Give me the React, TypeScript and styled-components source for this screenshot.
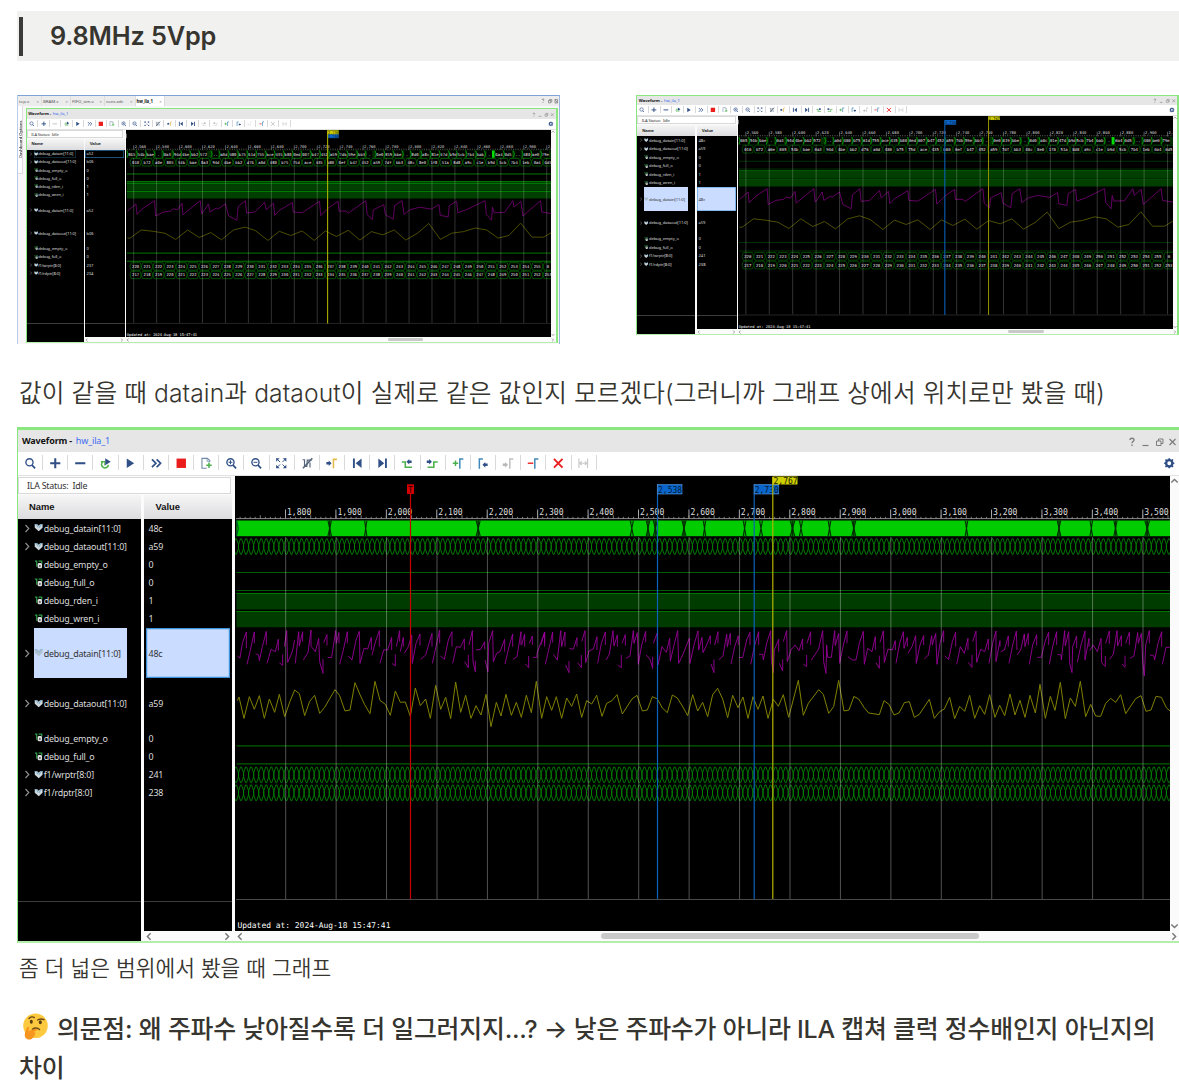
import React from "react";
import styled, { createGlobalStyle, css } from "styled-components";

/* ---------- helpers ---------- */

const u = (n: number) => `calc(var(--k) * ${n}px)`;
const uiFont = `"Noto Sans", "Open Sans", sans-serif`;
const docFont = `Inter, "Noto Sans CJK KR", sans-serif`;
const monoFont = `"DejaVu Sans Mono", "Liberation Mono", monospace`;

const Global = createGlobalStyle`
  * { box-sizing: border-box; }
  body { margin: 0; background: #fff; color: #37352f; font-family: ${docFont}; overflow: hidden; }
`;

/* ---------- document ---------- */

const Page = styled.main`
  width: 1179px;
  height: 1087px;
  padding: 11px 0 0 17px;
  overflow: hidden;
  background: #fff;
`;

const HeadingBlock = styled.section`
  display: flex;
  align-items: center;
  height: 50px;
  padding-left: 2px;
  background: #f1f1ef;
`;

const Quote = styled.h2`
  display: flex;
  align-items: center;
  height: 39px;
  margin: 0;
  padding: 0 0 2px 27px;
  border-left: 4px solid #3b3b3b;
  font-size: 25.3px;
  font-weight: 600;
  letter-spacing: -0.15px;
`;

const Gallery = styled.section`
  display: flex;
  justify-content: space-between;
  align-items: flex-start;
  height: 249px;
  margin-top: 34px;
`;

const Paragraph = styled.p`
  margin: 29px 0 0 2px;
  height: 54px;
  font-size: 24.65px;
  letter-spacing: 0.11px;
  line-height: 40px;
  font-weight: 350;
  white-space: nowrap;
`;

const Caption = styled.figcaption`
  margin: 7px 0 0 2px;
  height: 36px;
  font-size: 21.45px;
  line-height: 36px;
  font-weight: 350;
  white-space: nowrap;
`;

const Figure = styled.figure`
  margin: 0;
`;

const Question = styled.h3`
  margin: 24px 0 0 2px;
  font-size: 24.9px;
  letter-spacing: -0.22px;
  line-height: 39px;
  font-weight: 500;
  white-space: nowrap;
`;

const EmojiSvg = styled.svg`
  width: 26px;
  height: 27px;
  margin: 0 9px 0 3px;
  vertical-align: -2px;
`;

/* ---------- waveform window ---------- */

const Pane = styled.section<{ $k: number; $r: number; $w: number; $h: number; $b: number }>`
  --k: ${(p) => p.$k};
  --r: ${(p) => p.$r};
  display: flex;
  flex-direction: column;
  width: ${(p) => p.$w}px;
  height: ${(p) => p.$h}px;
  border: 1px solid #8ae67e;
  border-top-width: ${(p) => p.$b}px;
  border-right-width: ${(p) => (p.$b > 1 ? 0 : 2)}px;
  border-bottom: ${(p) => (p.$b > 1 ? 2 : 1)}px solid #b5eeac;
  background: #fbfbfb;
  font-family: ${uiFont};
  overflow: hidden;
  flex: none;
`;

const TitleBar = styled.header<{ $h: number }>`
  display: flex;
  justify-content: space-between;
  align-items: center;
  height: ${(p) => p.$h}px;
  flex: none;
  padding: 0 ${u(1)} 0 ${u(4)};
  background: #e6e6e6;
  color: #111;
  font-size: ${u(9)};
  letter-spacing: ${u(-0.15)};
  white-space: nowrap;
  b { font-weight: 700; margin-right: ${u(1.6)}; }
  span { color: #3b6cf0; }
`;

const WindowIcons = styled.svg`
  width: ${u(50)};
  height: ${u(12)};
  margin-top: ${u(3)};
  flex: none;
`;

const Toolbar = styled.nav<{ $h: number }>`
  display: flex;
  align-items: center;
  height: ${(p) => p.$h}px;
  flex: none;
  background: #fff;
  border-bottom: ${u(1)} solid #e2e2e2;
`;

const Tool = styled.span`
  display: flex;
  justify-content: center;
  align-items: center;
  width: ${u(25.18)};
  height: ${u(15)};
  flex: none;
  border-right: ${u(1)} solid #d9d9d9;
  svg { width: ${u(12.5)}; height: ${u(12.5)}; }
`;

const ToolRow = styled.div<{ $lead: number }>`
  display: flex;
  align-items: center;
  margin: 0 0 ${u(1)} ${(p) => p.$lead}px;
`;

const Settings = styled(Tool)`
  width: ${u(20)};
  margin-left: auto;
  border: 0;
`;

const Body = styled.div`
  display: flex;
  flex: 1;
  min-height: 0;
`;

const Signals = styled.div<{ $w: number }>`
  display: flex;
  flex-direction: column;
  width: ${(p) => p.$w}px;
  flex: none;
`;

const Status = styled.div`
  display: flex;
  align-items: center;
  height: ${u(17.5)};
  flex: none;
  margin: ${u(0.5)} ${u(4.5)} ${u(1)} 0;
  padding: ${u(1)} 0 0 ${u(8)};
  border: ${u(1)} solid #d9d9d9;
  background: #fff;
  color: #333;
  font-size: ${u(8.9)};
  letter-spacing: ${u(-0.25)};
  white-space: pre;
`;

const Columns = styled.div<{ $g: number }>`
  display: flex;
  flex: 1;
  gap: ${(p) => p.$g}px;
  min-height: 0;
`;

const Column = styled.div<{ $w: number }>`
  display: flex;
  flex-direction: column;
  width: ${(p) => p.$w}px;
  flex: none;
  background: #000;
  color: #dcdcdc;
`;

const ColumnHead = styled.div<{ $pad: number }>`
  display: flex;
  align-items: center;
  height: ${u(24)};
  flex: none;
  padding: 0 0 ${u(1.5)} ${(p) => u(p.$pad)};
  background: linear-gradient(#f6f6f7, #dcdcde);
  color: #111;
  font: 700 ${u(9.4)} "Liberation Sans", Arial, sans-serif;
`;

const rowBase = css<{ $tall?: boolean }>`
  display: flex;
  align-items: center;
  height: calc(var(--r) * ${(p) => (p.$tall ? 50.6 : 18.15)}px);
  flex: none;
  font-size: ${u(8.9)};
  letter-spacing: ${u(-0.2)};
  white-space: nowrap;
`;

const NameRow = styled.div<{ $tall?: boolean }>`
  ${rowBase}
  padding-left: ${u(4.5)};
`;

const NameCell = styled.span<{ $selected?: boolean; $focus?: boolean }>`
  display: flex;
  align-items: center;
  width: ${u(93)};
  height: 100%;
  ${(p) => p.$selected && css`background: #cadcff; color: #333;`}
  ${(p) => p.$focus && css`box-shadow: inset 0 0 0 ${u(1)} #1d4a66;`}
`;

const ValueRow = styled.div<{ $tall?: boolean; $selected?: boolean; $focus?: boolean }>`
  ${rowBase}
  margin: 0 ${u(2)} 0 ${u(1.5)};
  padding-left: ${u(3)};
  ${(p) => p.$selected && css`background: #cadcff; color: #333; box-shadow: inset 0 0 0 ${u(1.2)} #3d92dc;`}
  ${(p) => p.$focus && css`box-shadow: inset 0 0 0 ${u(1.5)} #256aa0;`}
`;

const Twisty = styled.svg`
  width: ${u(11)};
  height: ${u(9)};
  flex: none;
`;

const SignalIcon = styled.svg`
  width: ${u(9.6)};
  height: ${u(9.4)};
  margin-right: ${u(0.6)};
  flex: none;
`;

const Footer = styled.div<{ $h: number }>`
  height: ${(p) => p.$h}px;
  margin-top: auto;
  flex: none;
  border-top: ${u(1.6)} solid #3c3c3c;
`;

const ScrollX = styled.div`
  display: flex;
  align-items: center;
  justify-content: space-between;
  height: ${u(10)};
  flex: none;
  background: #fbfbfb;
  padding: 0 ${u(1)};
  svg { width: ${u(8)}; height: ${u(9)}; flex: none; }
`;

const Track = styled.div<{ $before: number; $thumb: number }>`
  display: flex;
  flex: 1;
  &::before { content: ""; width: ${(p) => p.$before}px; }
  &::after { content: ""; width: ${(p) => p.$thumb}px; height: ${u(6)}; border-radius: ${u(3)}; background: #c9c9c9; }
`;

const Wave = styled.div`
  display: flex;
  flex-direction: column;
  flex: 1;
  min-width: 0;
`;

const PlotRow = styled.div`
  display: flex;
  flex: 1;
  min-height: 0;
`;

const Plot = styled.svg`
  display: block;
  flex: 1;
  min-width: 0;
  height: 100%;
  background: #000;
  font-family: ${monoFont};
`;

const ScrollY = styled.div`
  display: flex;
  flex-direction: column;
  align-items: center;
  justify-content: space-between;
  width: ${u(9)};
  flex: none;
  background: #fbfbfb;
  padding: ${u(1)} 0;
  svg { width: ${u(9)}; height: ${u(8)}; }
`;

/* ---------- icons ---------- */

const N = "#2f4f86";
const G = "#4bb04b";
const B = "#3f88b8";

const arrowL = (c: string, x = 0, y = 0) => <path d={`M${x} ${y + 3}l3.6-3.6v2h3v3.2h-3v2z`} fill={c} />;
const arrowR = (c: string, x = 0, y = 0) => <path d={`M${x + 6.6} ${y + 3}l-3.6-3.6v2h-3v3.2h3v2z`} fill={c} />;

const lens = (
  <g fill="none" stroke={N} strokeWidth="1.7">
    <circle cx="7" cy="6.8" r="4.6" />
    <path d="M10.2 10.3l4 4.2" strokeWidth="2.2" />
  </g>
);

const tools: React.ReactNode[] = [
  lens,
  <path d="M8 1.5v13M1.5 8h13" stroke={N} strokeWidth="2.6" />,
  <path d="M1.5 8h13" stroke={N} strokeWidth="2.6" />,
  <g><path d="M5 6a4.4 4.4 0 1 0 7 4" fill="none" stroke={G} strokeWidth="1.9" /><path d="M2.5 6h5v5" fill="none" stroke={G} strokeWidth="1.5" /><path d="M8 1.5l7 4.5-7 4.5z" fill={N} /></g>,
  <path d="M3.5 2l9.5 6-9.5 6z" fill={N} />,
  <path d="M2.5 3l5 5-5 5M8.5 3l5 5-5 5" fill="none" stroke={N} strokeWidth="2.2" />,
  <rect x="2" y="2" width="12" height="12" fill="#ea1c1c" />,
  <g fill="none"><path d="M12.5 6V4.5L9.5 1.7h-7v12.6h6" stroke="#7089a8" strokeWidth="1.4" /><path d="M9 2v3.5h3.5" stroke="#7089a8" /><path d="M8 10.5h7M11.5 7v7" stroke={G} strokeWidth="1.9" /></g>,
  <g>{lens}<path d="M4.5 6.8h5M7 4.3v5" stroke={N} strokeWidth="1.3" /></g>,
  <g>{lens}<path d="M4.5 6.8h5" stroke={N} strokeWidth="1.3" /></g>,
  <g fill={N}><path d="M1.5 1.5h4.5L1.5 6zM14.5 1.5H10L14.5 6zM1.5 14.5V10L6 14.5zM14.5 14.5V10L10 14.5z" /><path d="M2 2l4.5 4.5M14 2L9.5 6.5M2 14l4.5-4.5M14 14L9.5 9.5" stroke={N} strokeWidth="1.2" /></g>,
  <g fill="none" stroke="#55657c"><path d="M2 3.5h2.5v8.5h3L8 4h5.5" strokeWidth="1.5" /><path d="M14.5 1.5L2.5 14.5" strokeWidth="2" /><path d="M11.5 7v6.5" strokeWidth="1.5" /></g>,
  <g>{arrowR(N, 0.5, 5)}<path d="M9.5 14.5V3h4.5" fill="none" stroke="#e3bb4a" strokeWidth="2" /></g>,
  <g fill={N}><path d="M2.5 2h2.4v12H2.5zM13.5 2v12L6 8z" /></g>,
  <g fill={N}><path d="M11.5 2h2.4v12h-2.4zM3 2v12L10.5 8z" /></g>,
  <g>{arrowL(N, 7, 3)}<path d="M1 6.5h4.5V13H14" fill="none" stroke={G} strokeWidth="2" /></g>,
  <g>{arrowR(N, 1, 3)}<path d="M2 13h8V6.500h5" fill="none" stroke={G} strokeWidth="2" /></g>,
  <g fill="none"><path d="M1 8h7M4.5 4.5v7" stroke={G} strokeWidth="1.9" /><path d="M10 15V2.5h4.5" stroke={B} strokeWidth="1.9" /></g>,
  <g><path d="M3 15V2.5h4.5" fill="none" stroke={B} strokeWidth="1.9" />{arrowL(N, 7, 7)}</g>,
  <g>{arrowR("#b8b8b8", 1, 7)}<path d="M10 15V2.5h4.5" fill="none" stroke="#c0c0c0" strokeWidth="1.9" /></g>,
  <g fill="none"><path d="M1 8h7" stroke="#e33" strokeWidth="2" /><path d="M10 15V2.5h4.5" stroke={B} strokeWidth="1.9" /></g>,
  <path d="M2.5 2.5l11 11M13.5 2.5l-11 11" stroke="#ea1c1c" strokeWidth="2.4" />,
  <path d="M2.5 2v12M13.5 2v12M3.5 8h9M6 5.5L3.5 8 6 10.5M10 5.5L12.5 8 10 10.5" fill="none" stroke="#c9c9c9" strokeWidth="1.5" />,
];

const Gear = () => (
  <svg viewBox="0 0 16 16">
    <circle cx="8" cy="8" r="4" fill="none" stroke={N} strokeWidth="3" />
    <path d="M8 1.5v3M8 11.5v3M1.5 8h3M11.5 8h3M3.2 3.2l2 2M10.8 10.8l2 2M12.8 3.2l-2 2M5.2 10.8l-2 2" stroke={N} strokeWidth="2.2" />
  </svg>
);

const WinIcons = () => (
  <WindowIcons viewBox="0 0 50 12" fill="none" stroke="#7d7d7d" strokeWidth="1.2">
    <path d="M2 4c0-2.4 4-2.4 4 0 0 1.5-2 1.5-2 3.2M4 8.6v1.4" strokeWidth="1.4" />
    <path d="M14.5 9.5h6" />
    <path d="M28.5 5h4.5v4.5h-4.5zM30.5 5V3H35v4.5h-2" strokeWidth="1" />
    <path d="M41.5 3l6 6M47.5 3l-6 6" />
  </WindowIcons>
);

const Chevron = ({ d }: { d: "l" | "r" | "u" | "d" }) => {
  const paths = { l: "M7 1L3 5l4 4", r: "M3 1L7 5 3 9", u: "M1 7L5 3l4 4", d: "M1 3L5 7l4-4" };
  return <svg viewBox="0 0 10 10"><path d={paths[d]} fill="none" stroke="#777" strokeWidth="1.8" /></svg>;
};

const BusIcon = ({ dim }: { dim?: boolean }) => (
  <SignalIcon viewBox="0 0 10.5 10" opacity={dim ? 0.75 : 1}>
    <path d="M.8 1.5h3.2l1.2 1.4 1.2-1.4h3v3.5L5.2 9 .8 5z" fill={dim ? "#a9bac4" : "#cfd8dc"} />
    <path d="M.8 1.5h2l1.6 3M9.4 1.5h-2L5.6 5" stroke="#7faec6" strokeWidth="1.2" fill="none" />
  </SignalIcon>
);

const BitIcon = () => (
  <SignalIcon viewBox="0 0 10.5 10">
    <path d="M1 1.2h2v6M5 1.2h3.5v2.5" fill="none" stroke="#2f9a48" strokeWidth="1.4" />
    <rect x="4" y="3.2" width="4.8" height="5.8" rx="1.5" fill="#dcdcdc" />
    <circle cx="6.4" cy="6.3" r="1" fill="#444" />
  </SignalIcon>
);

/* ---------- signals ---------- */

type Signal = { name: string; bus?: boolean; tall?: boolean };
const signals: Signal[] = [
  { name: "debug_datain[11:0]", bus: true },
  { name: "debug_dataout[11:0]", bus: true },
  { name: "debug_empty_o" },
  { name: "debug_full_o" },
  { name: "debug_rden_i" },
  { name: "debug_wren_i" },
  { name: "debug_datain[11:0]", bus: true, tall: true },
  { name: "debug_dataout[11:0]", bus: true, tall: true },
  { name: "debug_empty_o" },
  { name: "debug_full_o" },
  { name: "f1/wrptr[8:0]", bus: true },
  { name: "f1/rdptr[8:0]", bus: true },
];

/* ---------- wide plot ---------- */

const yellowWide = [
  { x: 230, p: "22,302 27,291 42,355 58,290 73,328 88,287 103,355 118,297 134,337 148,283 164,350 180,304 194,270 208,281 224,347 239,304 254,286 269,340 284,322 315,269 329,287 345,333 360,330 375,248 390,284 404,314 420,341 435,244 450,301 466,313 481,346 496,273 511,307 526,306 541,349 556,264 571,317 587,297 601,355 617,256 632,328 647,292 662,356 677,246 692,337 707,286 723,355 738,317 753,345 768,283 783,380 799,307 813,348 828,283 844,346 859,307 874,352 889,286 904,338 919,244 935,355" },
  { x: 540, p: "5,355 20,290 35,331 49,290 65,355 80,294 95,319 110,282 125,352 140,302 155,312 170,286 186,349 200,310 216,302 231,284 247,342 276,297 291,286 307,333 322,330 337,290 352,297 367,324 382,338 397,285 412,294 427,318 443,347 458,284 473,333 488,307 503,350 518,284 533,265 548,297 563,353 578,286 594,323 609,291 624,355 639,290 654,328 669,288 684,355 700,298 715,319 730,284 746,352 775,241 790,346 805,310 836,269 850,283 866,340 881,320 896,241 912,333 927,330 942,289" },
  { x: 850, p: "11,289 26,297 42,322 56,339 88,344 102,302 117,313 132,345 147,339 163,308 178,305 193,352 208,343 238,298 253,355 268,336 283,327 299,292 314,356 329,319 344,334 359,286 374,355 389,317 404,343 419,284 435,352 449,316 464,347 480,282 495,345 510,301 525,352 540,286 556,339 570,253 586,355 601,289 615,331 631,247 646,356 661,294 676,319 691,244 707,350 722,313 737,348 752,349 767,310 782,295 797,307 812,284 827,341 857,296 873,287 888,334 903,330 918,289 934,292 949,323 960,333" },
];

const magentaWide = [
  { x: 230, d: "M22,168L30,174 37,130 49,96 49,145M51,193L60,155 73,96 73,130M77,161L86,165 88,182 97,140 109,94 109,135M111,190L123,148 136,155 145,118 145,152M148,188L158,196 158,163M163,140L170,92 173,187 187,155 194,120M196,190L206,95 208,138 218,95 218,125M220,180L234,158 243,90 243,140M244,140L256,155 266,115 269,185 279,220 279,177M281,128L291,104 291,137M293,173L305,172 317,92 319,130 327,98 327,130M329,193L340,150 352,95 352,130M355,168L366,180 378,120 388,94 390,190 402,145 413,147 424,112 424,150M426,165L438,120 448,92 448,140M450,190L461,150 473,150 485,112 485,150M486,190L496,198 496,163M499,140L509,92 509,125M511,155L520,112 520,140M523,160L535,140 545,105 547,190 558,130 570,102 570,137M572,178L587,165 606,100 606,140M607,190L618,140 629,90 629,130M631,168L643,178 655,120 666,95 666,140M668,190L679,140 691,142 703,117 703,150M704,185L715,203 715,165M717,135L727,92 729,185 736,215 736,182M738,150L752,148 764,125 764,148M765,180L774,215 776,130 788,92 790,185 800,160 810,155 824,118 824,155M825,192L837,140 848,102 848,140M849,178L861,170 873,95 873,135M875,135L884,102 884,140M886,192L896,203 896,168M898,130L907,108 907,135M909,172L921,172 921,160 932,130 944,96 944,140" },
  { x: 540, d: "M3,135L14,96 14,130M16,193L27,145 38,96 38,128M40,163L52,180 62,92 65,140 75,96 75,140M77,195L87,218 87,183M88,145L100,148 111,113 111,140M113,188L124,203 124,165M125,125L135,92 137,188 147,153 160,147 171,110 171,150M173,190L184,130 196,96 196,135M198,180L208,163 219,92 222,138 232,105 232,140M233,195L244,203 244,165M246,130L256,104 256,137M258,175L270,168 280,92 282,130 292,98 295,193 305,135 317,94 317,127M319,165L330,178 338,205 338,170M340,130L351,100 354,195 366,140 379,157 389,115 391,183 402,135 413,92 416,190 428,165 448,115 450,190 462,135 474,93 476,150 486,112 489,158 500,135 511,107 511,133M513,192L522,218 522,178M524,135L534,95 534,130M536,180L549,168 560,102 562,140 571,100 571,135M573,192L584,140 595,107 595,135M597,172L608,173 620,120 630,97 630,135M632,193L643,140 656,95 656,135M657,163L668,163 670,180 680,130 692,92 694,180 700,218 703,150 716,118 716,155M718,190L728,213 728,178M730,125L740,92 742,185 753,150 765,135 777,152 788,117 788,150M790,192L800,200 800,165M801,130L812,95 812,135M814,180L836,147 848,92 851,185 858,220 860,135 863,172 874,172 884,92 886,137 896,100 899,190 909,140 921,93 921,130M924,170L930,175" },
  { x: 850, d: "M0,175L8,180 18,180 28,130 40,94 43,193 53,145 66,155 76,110 76,150M78,188L88,205 88,167M90,127L100,93 103,188 114,147 127,150 136,122 136,150M138,190L149,130 160,95 162,145 172,112 172,140M174,160L186,140 197,107 199,190 210,135 221,107 221,135M223,177L235,165 245,107 247,135 257,100 261,193 270,130 281,92 281,127M284,168L296,178 307,125 317,97 317,140M320,193L331,140 343,160 354,115 354,150M355,187L366,202 366,165M368,125L378,93 380,187 392,148 404,155 415,117 415,150M417,190L428,130 438,93 438,185 450,122 450,140M452,155L463,150 475,108 475,140M477,190L488,135 499,93 501,150M501,165L512,150 523,102 525,140 535,100 535,135M538,193L548,135 560,104 560,137M562,172L574,172 585,125 596,97 596,135M598,193L609,135 620,95 620,135M622,163L633,165 634,180 644,92 646,138 656,95 659,190 666,218 668,140 680,108 680,145M682,187L693,135 705,93 705,180 717,115 717,140M719,152L730,135 742,155 753,115 755,188 766,200 766,168M767,130L778,93 778,132M779,178L790,163 801,92 803,138 814,107 814,140M816,192L825,202 825,167M827,130L838,97 838,135M840,175L852,168 863,98 865,130 874,100 878,185 883,228 887,135 898,92 898,130M900,165L912,168 914,180 924,130 935,95 935,140M937,193L948,142 960,142" },
];

const range = (n: number) => Array.from({ length: n }, (_, i) => i);

function chain(y: number, h: number) {
  const p = 5.043;
  let d = "";
  for (let x = 235.5; x < 1170; x += p) {
    d += `M${x.toFixed(2)} ${y}h1l2 ${h / 2 - 2}v4l-2 ${h / 2 - 2}h-1l-2-${h / 2 - 2}v-4z`;
  }
  return d;
}

const breaks: [number, number][] = [
  [329.7, 3], [365.7, 1.8], [478.2, 3.4], [631.8, 2.6], [648, 2.9], [655.3, 3.4], [684, 3.4], [704.5, 1.9],
  [744.6, 2.2], [761, 2.5], [792.5, 4], [801, 2.6], [829.5, 2.2], [853.8, 3.4], [966.5, 2], [1059, 3], [1091.3, 2], [1115.5, 2.7], [1147.2, 4.2],
];

const WidePlot = () => (
  <Plot viewBox="235 476 935 455" preserveAspectRatio="none">
    {range(18).map((i) => {
      const x = 285.5 + i * 50.43;
      return (
        <g key={i}>
          <text x={x + 1.5} y="515" fontSize="8.1" fill="#ddd">{(1800 + i * 100).toLocaleString("en-US")}</text>
          <path d={`M${x} 509.5v9`} stroke="#aaa" strokeWidth="1" />
        </g>
      );
    })}
    <path d="M236 518.6H1170" stroke="#999" strokeWidth=".9" />
    {range(185).map((i) => (
      <path key={i} d={`M${240.1 + i * 5.043} ${(i + 1) % 5 === 0 ? 515.2 : 516.8}V518.6`} stroke="#999" strokeWidth=".8" />
    ))}
    <rect x="236.5" y="520.5" width="934" height="15.7" fill="#0c0" />
    <path d="M236.5 520.5l1.8 7.8-1.8 7.8" fill="none" stroke="#053" strokeWidth="1.2" />
    {breaks.map(([x, w], i) => {
      const h = w / 2 + 0.3;
      return (
        <g key={i}>
          <rect x={x - w / 4} y="520.5" width={w / 2} height="15.7" fill="#000" opacity={w > 2.6 ? 0.75 : 0.2} />
          <path d={`M${x - h} 520.5L${x + h} 536.2M${x + h} 520.5L${x - h} 536.2`} stroke="#022d02" strokeWidth="1.1" />
        </g>
      );
    })}
    <g fill="none" stroke="#008400" strokeWidth=".9">
      <path d={chain(538.7, 15.6)} />
      <path d={chain(767, 15.6)} />
      <path d={chain(785, 15.6)} />
    </g>
    <path d="M236.5 572.5H1170M236.5 590.5H1170M236.5 745.8H1170M236.5 763.9H1170" stroke="#005f00" strokeWidth="1.2" />
    <path d="M236.5 593h934v16.5h-934zM236.5 611h934v16.2h-934z" fill="#003c00" />
    <path d="M236.5 593.5H1170M236.5 611.5H1170" stroke="#007400" strokeWidth="1.2" />
    {magentaWide.map((s) => (
      <path key={s.x} d={s.d} transform={`translate(${s.x} 600) scale(.33333)`} fill="none" stroke="#9c009c" strokeWidth="2.6" />
    ))}
    {yellowWide.map((s) => (
      <polyline key={s.x} points={s.p} transform={`translate(${s.x} 600) scale(.33333)`} fill="none" stroke="#828200" strokeWidth="3" />
    ))}
    {range(18).map((i) => (
      <path key={i} d={`M${285.7 + i * 50.43} 537V899`} stroke="#fff" strokeOpacity=".32" strokeWidth="1" />
    ))}
    <path d="M236 899.5H1170" stroke="#4a4a4a" strokeWidth="1" />
    <path d="M410.5 488V899" stroke="#c80000" strokeWidth="1.2" />
    <rect x="407" y="484.3" width="7" height="9.7" fill="#d20000" />
    <text x="408.1" y="492.5" fontSize="8" fill="#200">T</text>
    {[[657.5, "2,538"], [754.2, "2,730"]].map(([x, t]) => (
      <g key={t}>
        <path d={`M${x} 484V899`} stroke="#0a62bd" strokeWidth="1.2" />
        <rect x={x} y="484.5" width="24.5" height="9.5" fill="#0a66cc" stroke="#4d86c4" strokeWidth=".7" />
        <text x={Number(x) + 0.5} y="492.5" fontSize="8" fill="#001a33">{t}</text>
      </g>
    ))}
    <path d="M772.8 477V899" stroke="#b5b500" strokeWidth="1.2" />
    <rect x="772.5" y="476.5" width="25" height="8" fill="#cfcf00" />
    <text x="773.5" y="484" fontSize="8" fill="#222200">2,767</text>
    <text x="237.5" y="928" fontSize="7.95" fill="#fff">Updated at: 2024-Aug-18 15:47:41</text>
  </Plot>
);

/* ---------- close-up plot ---------- */

const magentaClose =
  "330,342 356,320 359,352 378,333 413,310 416,357 440,345 462,342 470,335 483,338 497,318 500,353 553,310 557,350 565,340 578,320 583,345 602,333 608,335 630,320 640,357 665,370 669,328 691,310 695,348 720,345 750,315 755,338 777,318 781,355 795,340 835,316 838,345 865,347 918,312 922,356 945,333 975,312 978,342 1000,342 1007,348 1060,310 1064,353 1080,368 1083,338 1115,322 1120,353 1144,367 1148,325 1171,310 1177,352 1195,338 1225,330 1260,336 1284,322 1288,355 1312,360 1316,325 1338,312 1342,347 1370,337 1425,310 1429,352 1445,370 1448,330 1453,347 1485,346 1510,310 1514,330 1535,312 1541,357 1595,310 1599,345 1630,350";
const yellowClose =
  "330,425 338,425 372,400 408,404 445,410 478,429 514,400 550,423 585,408 618,430 655,400 690,391 722,402 760,432 795,404 830,417 865,403 902,432 936,403 970,420 1006,401 1042,431 1077,405 1112,415 1147,400 1182,431 1218,410 1253,380 1288,429 1323,410 1359,405 1395,394 1430,400 1465,425 1498,417 1534,379 1569,422 1605,422 1630,407";

const dinCells: [number, string][] = [
  [343, "865"], [372, "54b"], [400, "bae"], [425, "."], [452, "0a3"], [483, "94d"], [508, "4be"], [536, "bb2"], [563, "572"], [600, ".."],
  [625, "a0d"], [653, "480"], [682, "b75"], [711, "61d"], [738, "755"], [767, "ace"], [794, "435"], [822, "b80"], [849, "0ed"], [876, "007"],
  [905, "b47"], [933, "452"], [961, "a59"], [990, "7db"], [1017, "59e"], [1047, "bb3"], [1072, "."], [1103, "0e0"], [1130, "819"], [1158, "bbe"],
  [1186, "."], [1211, "8d0"], [1243, "a8c"], [1272, "81e"], [1299, "47d"], [1328, "b9d"], [1352, "5cb"], [1381, "7b4"], [1411, "bab"], [1438, "."],
  [1468, "6a4"], [1496, "0d5"], [1526, ".."], [1553, "480"], [1580, "ae0"], [1610, "79e"],
];
const doutCells =
  "010 b72 a0e 805 54b bae 0a3 94d 4be bb2 d76 a0d 480 b75 75d ace 435 b80 0ef b47 452 a59 7df bb3 48c 8e0 1f8 51a 8d8 a9c c1e b9d 5cb 7b4 1eb 0a4 6d5".split(" ");
const wrCells = range(37).map((i) => (i === 36 ? "0" : String(220 + i)));
const rdCells = range(37).map((i) => String(217 + i));

const HexRow = ({ y, cells, color }: { y: number; cells: string[]; color: string }) => (
  <g>
    {cells.map((c, i) => {
      const x = 355 + i * 35.14;
      return (
        <g key={i}>
          <path d={`M${x - 17.5} ${y + 12}l4-11.5h27l4 11.5-4 11.5h-27z`} fill="none" stroke={color} strokeWidth="2.4" />
          <text x={Math.min(x, 1618)} y={y + 16.5} fontSize="12" textAnchor="middle" fill="#e8e8e8">{c}</text>
        </g>
      );
    })}
  </g>
);

type Cursor = { x: number; y: number; h: number; color: string; line?: string; text: string };

const ClosePlot = ({ bright, cursors }: { bright?: boolean; cursors: Cursor[] }) => {
  const hex = bright ? "#006600" : "#005200";
  return (
    <Plot viewBox="325.5 93 1304.4 637" preserveAspectRatio="none">
      <path d="M326 104v14" stroke="#aaa" strokeWidth="3" />
      {range(19).map((i) => (
        <g key={i}>
          <path d={`M${349 + i * 70.28} 140v14`} stroke="#888" strokeWidth="2" />
          <text x={352 + i * 70.28} y="147.5" fontSize="11.6" fill="#ddd">
            {i === 18 ? "2," : (2560 + i * 20).toLocaleString("en-US")}
          </text>
        </g>
      ))}
      <path d="M328 152H1630" stroke="#666" strokeWidth="3" strokeDasharray="3 4" />
      <path d="M328 156h1302v22H328z" fill="#003000" />
      {dinCells.map(([x, t], i) => (
        <g key={i}>
          <rect x={x - (t.length === 3 ? 11.5 : 8)} y="157" width={t.length === 3 ? 23 : 16} height="20" fill="#000" />
          <path d={`M${x - 15} 156l4 11-4 11`} fill="none" stroke="#008c00" strokeWidth="3" />
          <text x={x} y="171.5" fontSize="12" textAnchor="middle" fill="#e8e8e8">{t}</text>
        </g>
      ))}
      <path d="M1450 156v22" stroke="#00e000" strokeWidth="7" />
      <HexRow y={180} cells={doutCells} color={hex} />
      <path d="M328 228H1630M328 251H1630M328 471H1630M328 496H1630" stroke={bright ? "#007a00" : "#003000"} strokeWidth="3" />
      <path d="M328 256h1302v22H328zM328 281h1302v22.5H328z" fill="#003f00" />
      <path d="M328 256H1630M328 281H1630" stroke={bright ? "#009c00" : "#005800"} strokeWidth="3" />
      <polyline points={magentaClose} fill="none" stroke="#760076" strokeWidth="2.5" />
      <polyline points={yellowClose} fill="none" stroke="#5e5e00" strokeWidth="2.5" />
      <HexRow y={500} cells={wrCells} color={hex} />
      <HexRow y={526} cells={rdCells} color={hex} />
      {range(19).map((i) => (
        <path key={i} d={`M${349 + i * 70.28} 178V686`} stroke="#fff" strokeOpacity=".2" strokeWidth="3" />
      ))}
      <path d="M326 687H1630" stroke="#242424" strokeWidth="3" />
      {cursors.map((c, i) => (
        <g key={i}>
          {c.line && <path d={`M${c.x} ${c.y}V687`} stroke={c.line} strokeWidth="3.2" />}
          <rect x={c.x} y={c.y} width="34" height={c.h} fill={c.color} />
          <text x={c.x + 1} y={c.y + c.h - 1.5} fontSize="11" fill="#111">{c.text}</text>
        </g>
      ))}
      <text x="328" y="727" fontSize="11.2" fill="#fff">Updated at: 2024-Aug-18 15:47:41</text>
    </Plot>
  );
};

/* ---------- waveform window assembly ---------- */

type WindowProps = {
  k: number; r: number; width: number; height: number; border: number;
  title: number; bar: number; lead: number; name: number; gap: number; value: number; signals: number;
  footer: number; values: string[]; selected?: number; focus?: number;
  inactive?: number[]; before: number; thumb: number; children: React.ReactNode;
};

const ToolIcon = styled.svg<{ $off?: boolean }>`
  ${(p) => p.$off && css`filter: grayscale(1); opacity: 0.35;`}
`;

const WaveformWindow = (p: WindowProps) => (
  <Pane $k={p.k} $r={p.r} $w={p.width} $h={p.height} $b={p.border}>
    <TitleBar $h={p.title}>
      <div><b>Waveform - </b><span>hw_ila_1</span></div>
      <WinIcons />
    </TitleBar>
    <Toolbar $h={p.bar}>
      <ToolRow $lead={p.lead}>
        {tools.map((t, i) => (
          <Tool key={i}>
            <ToolIcon viewBox="0 0 16 16" $off={p.inactive?.includes(i)}>{t}</ToolIcon>
          </Tool>
        ))}
      </ToolRow>
      <Settings><Gear /></Settings>
    </Toolbar>
    <Body>
      <Signals $w={p.signals}>
        <Status>ILA Status:  Idle</Status>
        <Columns $g={p.gap}>
          <Column $w={p.name}>
            <ColumnHead $pad={11}>Name</ColumnHead>
            {signals.map((s, i) => (
              <NameRow key={i} $tall={s.tall}>
                <Twisty viewBox="0 0 11 9">
                  {s.bus && <path d="M2.5 1l3.3 3.5L2.5 8" fill="none" stroke="#8d8d8d" strokeWidth="1.2" />}
                </Twisty>
                <NameCell $selected={p.selected === i} $focus={p.focus === i}>
                  {s.bus ? <BusIcon dim={p.selected === i} /> : <BitIcon />}
                  {s.name}
                </NameCell>
              </NameRow>
            ))}
            <Footer $h={p.footer} />
          </Column>
          <Column $w={p.value}>
            <ColumnHead $pad={11.5}>Value</ColumnHead>
            {signals.map((s, i) => (
              <ValueRow key={i} $tall={s.tall} $selected={p.selected === i} $focus={p.focus === i}>{p.values[i]}</ValueRow>
            ))}
            <Footer $h={p.footer - 10 * p.k} />
            <ScrollX><Chevron d="l" /><Chevron d="r" /></ScrollX>
          </Column>
        </Columns>
      </Signals>
      <Wave>
        <PlotRow>
          {p.children}
          <ScrollY><Chevron d="u" /><Chevron d="d" /></ScrollY>
        </PlotRow>
        <ScrollX><Chevron d="l" /><Track $before={p.before} $thumb={p.thumb} /><Chevron d="r" /></ScrollX>
      </Wave>
    </Body>
  </Pane>
);

/* ---------- tabbed frame ---------- */

const Frame = styled.div`
  display: flex;
  flex-direction: column;
  width: 543px;
  height: 249px;
  border-top: 1.5px solid #7fa3d6;
  border-right: 1px solid #9db8de;
  border-left: 1px solid #b9cdea;
  background: #f7f7f7;
`;

const Tabs = styled.nav`
  display: flex;
  align-items: center;
  height: 10px;
  flex: none;
  background: #ececec;
  color: #555;
  font: 4.3px ${uiFont};
`;

const Tab = styled.span<{ $w: number; $active?: boolean }>`
  display: flex;
  justify-content: space-between;
  align-items: center;
  width: ${(p) => p.$w}px;
  height: 100%;
  padding: 0 2px 0 1px;
  border-right: 1px solid #ddd;
  ${(p) => p.$active && css`background: #fff; color: #111; font-weight: 700; letter-spacing: -0.15px;`}
  i { font-style: normal; font-weight: 400; color: #777; }
`;

const TabIcons = styled.svg`
  width: 17px;
  height: 6px;
  margin: 0 1px 0 auto;
`;

const FrameBody = styled.div`
  display: flex;
  flex: 1;
  min-height: 0;
`;

const SideTab = styled.div`
  display: flex;
  align-items: center;
  justify-content: center;
  width: 5px;
  height: 68px;
  margin-right: 2.5px;
  background: #fff;
  border-left: 1px solid #ddd;
  border-top: 1px solid #ddd;
  writing-mode: vertical-rl;
  transform: rotate(180deg);
  font: 4.1px ${uiFont};
  color: #111;
  white-space: nowrap;
`;

const PaneSlot = styled.div`
  padding-top: 2px;
`;

const Emoji = () => (
  <EmojiSvg viewBox="0 0 26 27">
    <circle cx="13.5" cy="12.7" r="12.3" fill="#fdc93e" />
    <path d="M7 5.5c1.5-2 4-2 5.3-.9M15.5 7c2.5-1.3 5-1.2 6.5-.3" fill="none" stroke="#6b4a17" strokeWidth="1.4" strokeLinecap="round" />
    <ellipse cx="9.3" cy="8.7" rx="1.5" ry="2" fill="#5b3b12" />
    <ellipse cx="18.3" cy="9.3" rx="1.5" ry="2" fill="#5b3b12" />
    <path d="M10.5 16.3c2-1.7 5-1.6 7 .2" fill="none" stroke="#6b4a17" strokeWidth="1.5" strokeLinecap="round" />
    <path d="M5 14.5c1-1.6 2.5-.6 2 1.2l-.5 2.3 7-2.3c1.8-.4 2 1.5.6 2.1l-2.5 1.2c2.7.4 2 2 1 2.3.8 1.6-.2 2.3-1.2 2.4-1 2.6-3.7 3.3-6 2.5C2 25 2.5 20.5 3.6 18z" fill="#f6951f" />
  </EmojiSvg>
);

const leftValues = ["a52", "b06", "0", "0", "1", "1", "a52", "b06", "0", "0", "237", "234"];
const mainValues = ["48c", "a59", "0", "0", "1", "1", "48c", "a59", "0", "0", "241", "238"];

export default function App() {
  return (
    <>
      <Global />
      <Page>
        <HeadingBlock><Quote>9.8MHz 5Vpp</Quote></HeadingBlock>
        <Gallery>
          <Frame>
            <Tabs>
              <Tab $w={24}>top.v <i>×</i></Tab>
              <Tab $w={29}>BRAM.v <i>×</i></Tab>
              <Tab $w={34}>FIFO_sim.v <i>×</i></Tab>
              <Tab $w={30.5}>cons.xdc <i>×</i></Tab>
              <Tab $w={29} $active>hw_ila_1 <i>×</i></Tab>
              <TabIcons viewBox="0 0 17 6" fill="none" stroke="#777" strokeWidth=".7">
                <path d="M1 2c0-1.5 2-1.5 2 0L2 3.2M2 4.2v.8M7.5 2.500h2.300v2.300H7.500zM8.500 2.500v-1h2.300v2.300h-1M14 1.500h2.500v3.500H14zM14 1.500l2.500 3.500" />
              </TabIcons>
            </Tabs>
            <FrameBody>
              <SideTab>Dashboard Options</SideTab>
              <PaneSlot>
                <WaveformWindow
                  k={0.4557} r={0.452} width={532} height={235} border={1} title={9.5} bar={11.5} lead={0.3}
                  name={57} gap={1} value={40} signals={99} footer={19.5} values={leftValues} focus={0}
                  inactive={[2, 15, 16, 19, 21]} before={258} thumb={35}
                >
                  <ClosePlot
                    bright
                    cursors={[
                      { x: 943, y: 106, h: 12, color: "#0a66cc", text: "2,730" },
                      { x: 943, y: 94, h: 12, color: "#cfcf00", line: "#b5b500", text: "2,730" },
                    ]}
                  />
                </WaveformWindow>
              </PaneSlot>
            </FrameBody>
          </Frame>
          <WaveformWindow
            k={0.467} r={0.47} width={543} height={240} border={1} title={8.5} bar={11.5} lead={0}
            name={57.5} gap={2} value={40} signals={101} footer={19.5} values={mainValues} selected={6}
            before={266} thumb={36}
          >
            <ClosePlot
              cursors={[
                { x: 946, y: 105, h: 14, color: "#0a66cc", line: "#0a62bd", text: "2,730" },
                { x: 1077, y: 94, h: 11, color: "#cfcf00", line: "#8f8f00", text: "2,767" },
              ]}
            />
          </WaveformWindow>
        </Gallery>
        <Paragraph>값이 같을 때 datain과 dataout이 실제로 같은 값인지 모르겠다(그러니까 그래프 상에서 위치로만 봤을 때)</Paragraph>
        <Figure>
          <WaveformWindow
            k={1} r={1} width={1162} height={516} border={3} title={21.5} bar={24.5} lead={-0.2}
            name={123} gap={3} value={88} signals={217} footer={40} values={mainValues} selected={6}
            before={357} thumb={378}
          >
            <WidePlot />
          </WaveformWindow>
          <Caption>좀 더 넓은 범위에서 봤을 때 그래프</Caption>
        </Figure>
        <Question>
          <Emoji />의문점: 왜 주파수 낮아질수록 더 일그러지지...? → 낮은 주파수가 아니라 ILA 캡쳐 클럭 정수배인지 아닌지의<br />차이
        </Question>
      </Page>
    </>
  );
}
